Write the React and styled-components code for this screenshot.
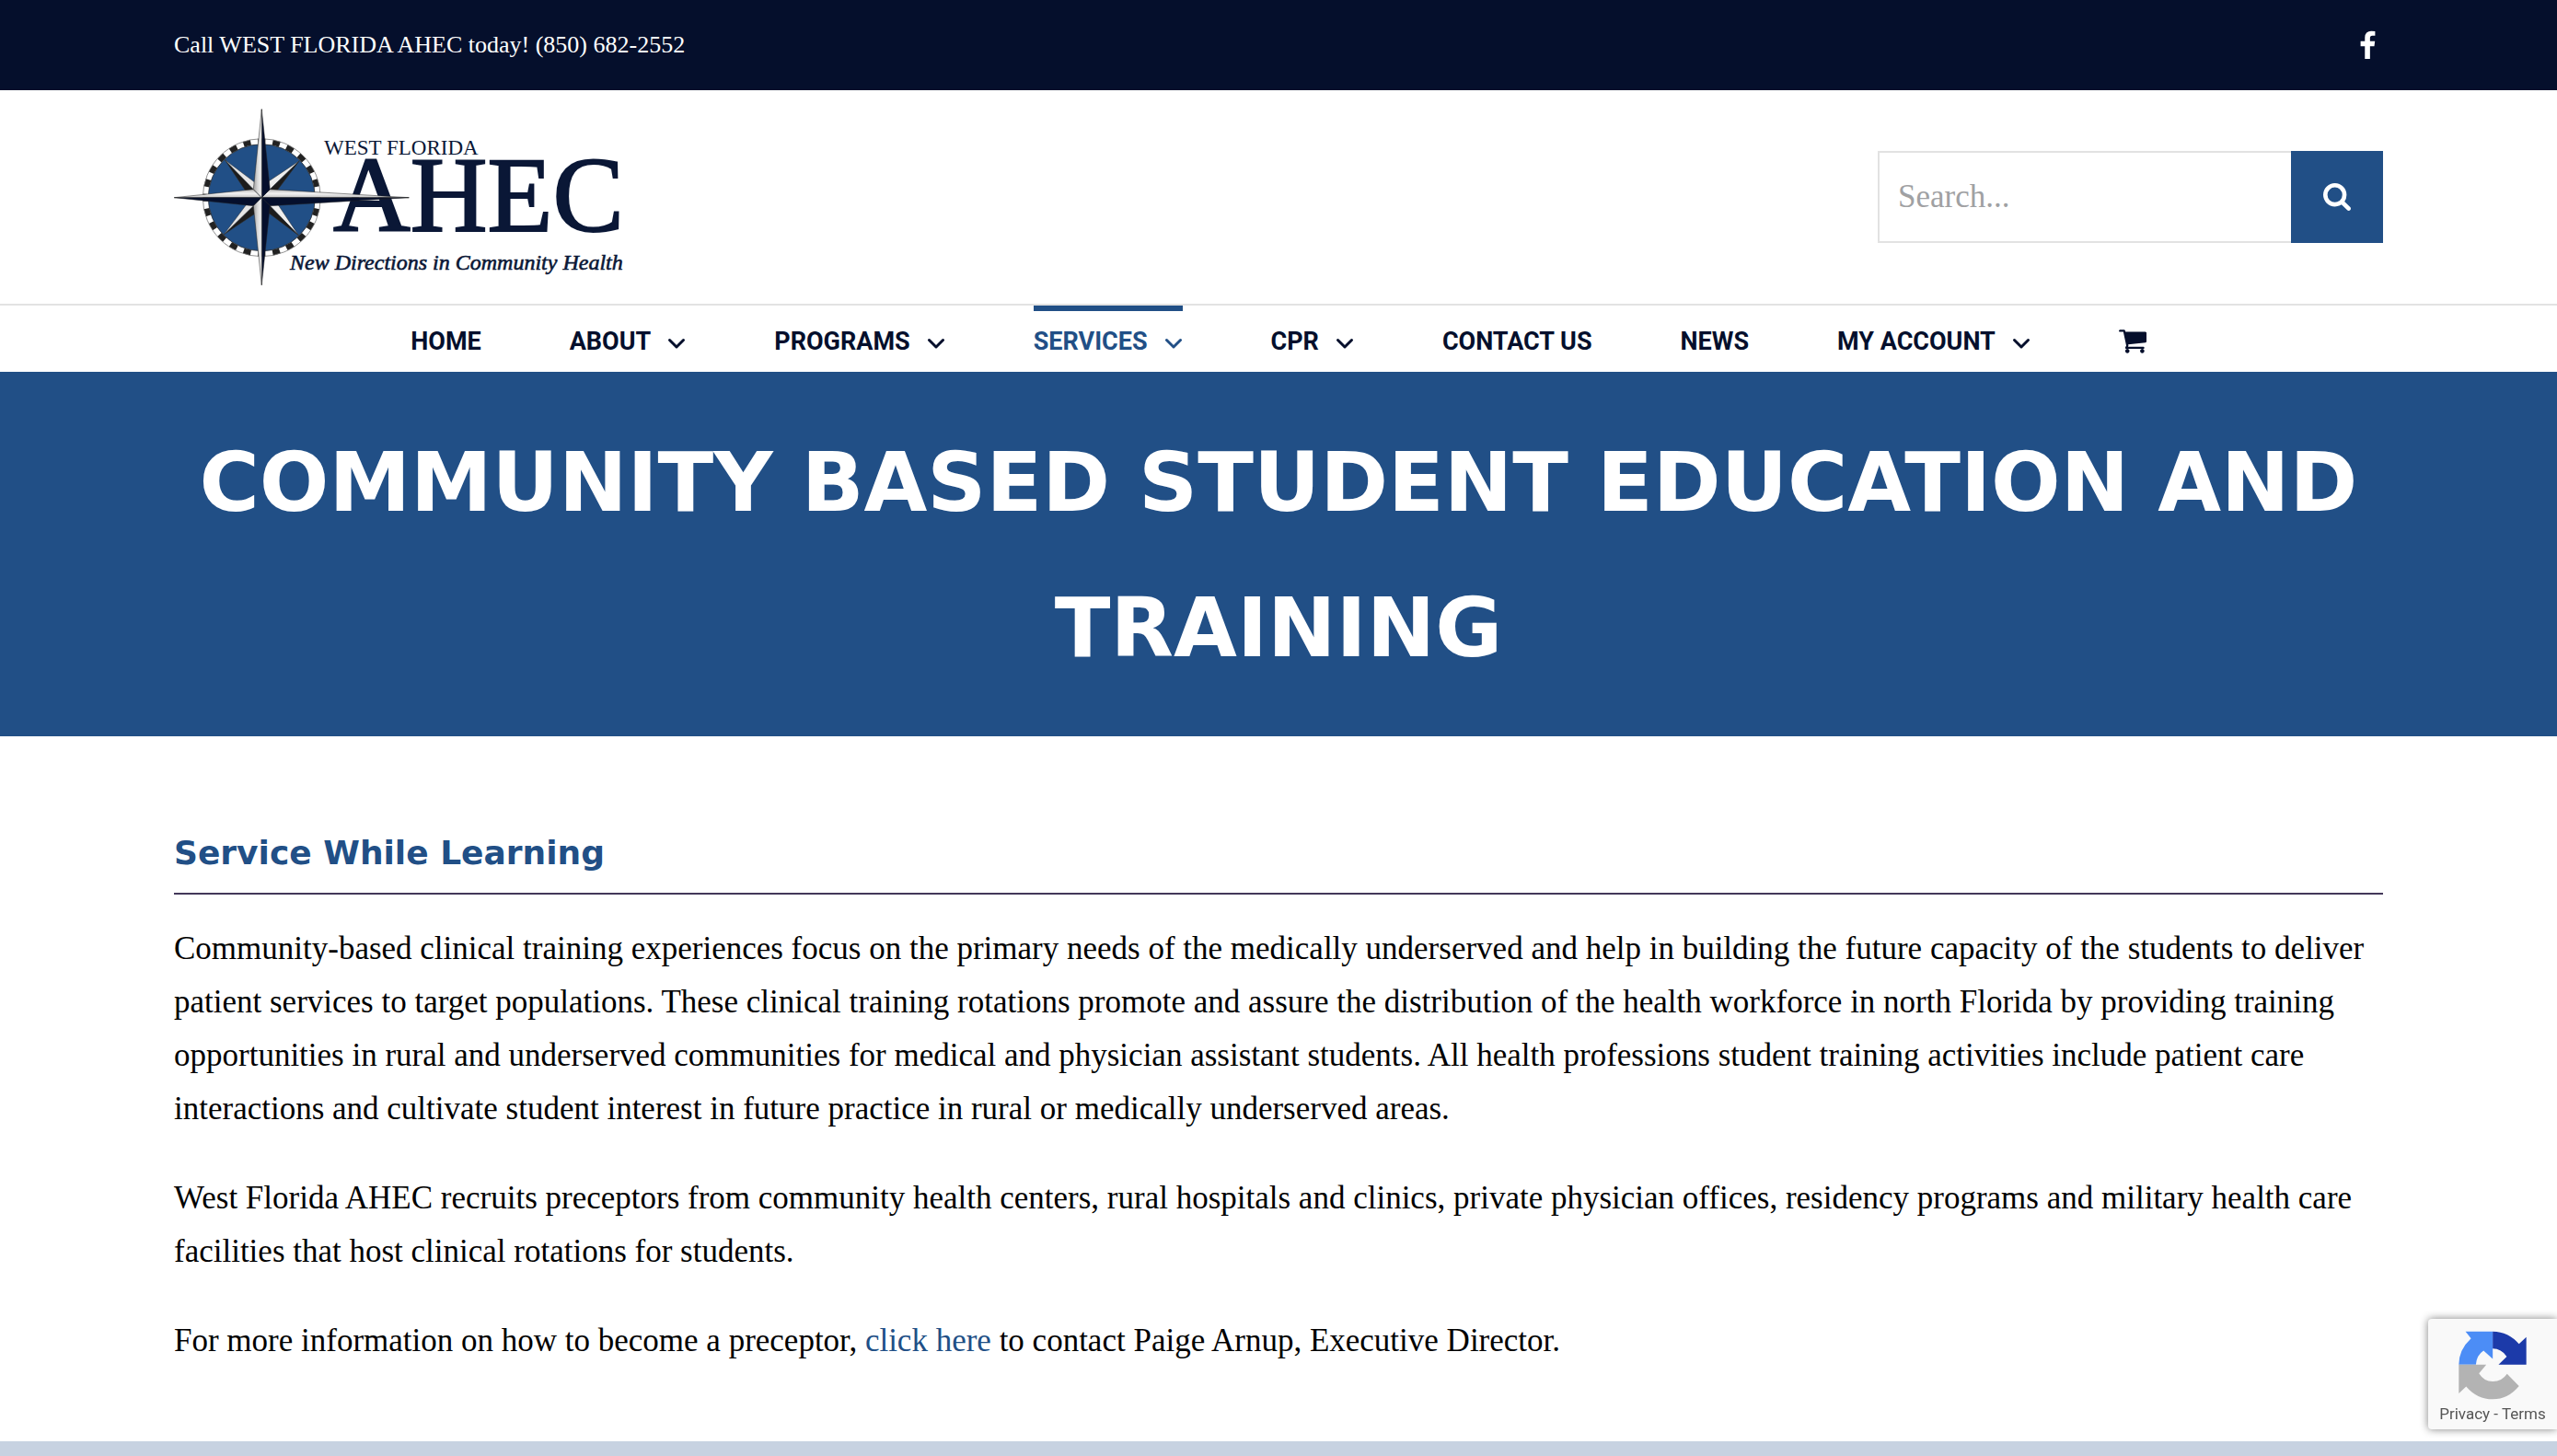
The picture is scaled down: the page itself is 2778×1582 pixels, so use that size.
import React from "react";
import styled, { createGlobalStyle } from "styled-components";

const navy = "#050f2c";
const blue = "#214f86";
const line = "#e2e2e2";
const serif = '"Liberation Serif", serif';
const display = '"DejaVu Sans", sans-serif';

const GlobalStyle = createGlobalStyle`
  *, *::before, *::after { box-sizing: border-box; }
  body { margin: 0; background: #fff; color: #000; font-family: ${serif}; }
  a { color: inherit; text-decoration: none; }
`;

const Page = styled.div`
  min-height: 100vh;
  display: flex;
  flex-direction: column;
`;

const Container = styled.div`
  width: calc(100% - 64px);
  max-width: 2400px;
  margin: 0 auto;
  display: flex;
  align-items: center;
  justify-content: space-between;
`;

const TopBar = styled.div`
  background: ${navy};
  color: #fff;
  font-size: 26px;
  line-height: 98px;
`;

const SocialLink = styled.a`
  display: flex;
  padding-right: 8px;
`;

const Header = styled.header`
  padding: 20px 0;
  border-bottom: 2px solid ${line};
`;

const LogoLink = styled.a`
  display: flex;
`;

const SearchForm = styled.form`
  display: flex;
  width: 549px;
  height: 100px;
`;

const SearchInput = styled.input`
  flex: 1;
  min-width: 0;
  padding: 0 20px;
  border: 2px solid ${line};
  border-right: 0;
  border-radius: 0;
  background: #fff;
  font-family: ${serif};
  font-size: 35px;
  &::placeholder { color: #a0a1a3; opacity: 1; }
`;

const SearchButton = styled.button`
  width: 100px;
  display: flex;
  align-items: center;
  justify-content: center;
  padding: 0;
  border: 0;
  background: ${blue};
  color: #fff;
`;

const Nav = styled.nav`
  display: flex;
  flex-wrap: wrap;
  justify-content: center;
  gap: 0 96px;
`;

const NavLink = styled.a`
  display: flex;
  align-items: center;
  gap: 18px;
  height: 72px;
  padding-bottom: 1px;
  border-top: 6px solid ${(p) => (p.$active ? blue : "transparent")};
  color: ${(p) => (p.$active ? blue : navy)};
  font-family: Roboto, sans-serif;
  font-size: 27px;
  font-weight: 700;
  line-height: 40px;
`;

const Hero = styled.section`
  padding: 41px 32px 39px;
  background: ${blue};
`;

const Title = styled.h1`
  max-width: 2400px;
  margin: 0 auto;
  color: #fff;
  font-family: ${display};
  font-size: 89px;
  font-weight: 700;
  line-height: 158px;
  text-align: center;
`;

const Main = styled.main`
  width: calc(100% - 64px);
  max-width: 2400px;
  margin: 0 auto;
  padding: 100px 0 80px;
`;

const SectionTitle = styled.h2`
  margin: 0 0 30px;
  padding-bottom: 16px;
  border-bottom: 2px solid #43385a;
  color: ${blue};
  font-family: ${display};
  font-size: 36px;
  font-weight: 700;
  line-height: 54px;
`;

const Paragraph = styled.p`
  margin: 0 0 39px;
  font-size: 35px;
  line-height: 58px;
  &:last-child { margin-bottom: 0; }
`;

const TextLink = styled.a`
  color: ${blue};
`;

const Footer = styled.footer`
  flex: 1;
  min-height: 16px;
  background: #c7d2e1;
`;

const Badge = styled.aside`
  position: fixed;
  right: 0;
  bottom: 29px;
  width: 140px;
  height: 120px;
  display: flex;
  flex-direction: column;
  align-items: center;
  padding-top: 13px;
  border-radius: 4px 0 0 4px;
  background: #f9f9f9;
  box-shadow: 0 0 10px #808080;
  color: #555;
  font-family: Roboto, sans-serif;
  font-size: 17px;
  line-height: 30px;
  white-space: nowrap;
`;

const rotations = [0, 90, 180, 270];

function Logo() {
  return (
    <svg width="496" height="192" viewBox="0 0 496 192" role="img" aria-label="West Florida AHEC">
      <defs>
        <linearGradient id="silverV" x1="0" x2="1" y1="0" y2="0">
          <stop offset="0" stopColor="#9c9c9c" />
          <stop offset="0.5" stopColor="#d8d8d8" />
          <stop offset="1" stopColor="#f6f6f6" />
        </linearGradient>
        <linearGradient id="silverH" x1="0" x2="0" y1="0" y2="1">
          <stop offset="0" stopColor="#b4b4b4" />
          <stop offset="0.5" stopColor="#f2f2f2" />
          <stop offset="1" stopColor="#c4c4c4" />
        </linearGradient>
      </defs>
      <g fill="#0a1736" fontFamily="Liberation Serif, serif">
        <text x="163" y="50" fontSize="23">WEST FLORIDA</text>
        <text x="173" y="133" fontSize="116" stroke="#0a1736" strokeWidth="2">AHEC</text>
        <text x="126" y="175" fontSize="24" fontStyle="italic" stroke="#0a1736" strokeWidth="0.6">
          New Directions in Community Health
        </text>
      </g>
      <g transform="translate(95.3 96.7)">
        <circle r="61" fill={blue} stroke="#fff" strokeWidth="6" />
        <circle r="61" fill="none" stroke="#222" strokeWidth="6" pathLength="48" strokeDasharray="1 1" strokeDashoffset="0.5" />
        <circle r="64" fill="none" stroke="#777" strokeWidth="0.8" />
        <circle r="58" fill="none" stroke="#333" strokeWidth="0.8" />
        {rotations.map((angle) => (
          <g key={angle} stroke="#333" strokeWidth="0.5" transform={`rotate(${angle})`}>
            <path d="M-40-41L-18-8L-6-6Z" fill={angle === 90 || angle === 180 ? "#eee" : "#1c1c1c"} />
            <path d="M-40-41L-8-17L-6-6Z" fill={angle === 90 || angle === 180 ? "#1c1c1c" : "#e6e6e6"} />
          </g>
        ))}
        <g stroke="#222" strokeWidth="0.5">
          <path d="M0 0L9-9L160 0Z" fill="url(#silverH)" />
          <path d="M0 0L9 9L160 0Z" fill={navy} />
          <path d="M0 0L-9-9L-95 0Z" fill="url(#silverH)" />
          <path d="M0 0L-9 9L-95 0Z" fill={navy} />
          <path d="M0 0L9-9L0-96Z" fill={navy} />
          <path d="M0 0L-9-9L0-96Z" fill="url(#silverV)" />
          <path d="M0 0L9 9L0 95Z" fill={navy} />
          <path d="M0 0L-9 9L0 95Z" fill="url(#silverV)" />
        </g>
      </g>
    </svg>
  );
}

function FacebookIcon() {
  return (
    <svg width="17" height="32" viewBox="62 8 930 1660" fill="currentColor" aria-hidden="true">
      <path d="M959 12v264h-157q-86 0-116 36t-30 108v189h293l-39 296h-254v759h-306v-759h-255v-296h255v-218q0-186 104-288.5t277-102.5q147 0 228 12z" />
    </svg>
  );
}

function SearchIcon() {
  return (
    <svg width="30" height="30" viewBox="0 128 1664 1664" fill="currentColor" aria-hidden="true">
      <path d="M1152 832q0-185-131.5-316.5t-316.5-131.5-316.5 131.5-131.5 316.5 131.5 316.5 316.5 131.5 316.5-131.5 131.5-316.5zm512 832q0 52-38 90t-90 38q-54 0-90-38l-343-342q-179 124-399 124-143 0-273.5-55.5t-225-150-150-225-55.5-273.5 55.5-273.5 150-225 225-150 273.5-55.5 273.5 55.5 225 150 150 225 55.5 273.5q0 220-124 399l343 343q37 37 37 90z" />
    </svg>
  );
}

function CartIcon() {
  return (
    <svg width="30" height="26" viewBox="0 256 1664 1408" fill="currentColor" aria-hidden="true">
      <path d="M640 1536q0 52-38 90t-90 38-90-38-38-90 38-90 90-38 90 38 38 90zm896 0q0 52-38 90t-90 38-90-38-38-90 38-90 90-38 90 38 38 90zm128-1088v512q0 24-16.5 42.5t-40.5 21.5l-1044 122q13 60 13 70 0 16-24 64h920q26 0 45 19t19 45-19 45-45 19h-1024q-26 0-45-19t-19-45q0-11 8-31.5t16-36 21.5-40 15.5-29.5l-177-823h-204q-26 0-45-19t-19-45 19-45 45-19h256q16 0 28.5 6.5t19.5 15.5 13 24.5 8 26 5.5 29.5 4.5 26h1201q26 0 45 19t19 45z" />
    </svg>
  );
}

function Chevron() {
  return (
    <svg width="20" height="20" viewBox="0 0 20 20" fill="none" stroke="currentColor" strokeWidth="3" strokeLinecap="round" strokeLinejoin="round" aria-hidden="true">
      <path d="M2.5 8.5L10 16L17.5 8.5" />
    </svg>
  );
}

function RecaptchaMark() {
  return (
    <svg width="74" height="75" viewBox="0 0 221 226" aria-hidden="true">
      <path fill="#4c8df6" d="M22 2H111V92L81 65Q58 80 56 111H0Q0 62 40 25Z" />
      <path fill="#1c3aa9" d="M111 2Q163 3 197 43L221 20V111H130L157 84Q139 58 111 58Z" />
      <path fill="#b3b3b3" d="M0 111H90L66 139Q82 165 111 166Q141 166 158 141L197 181Q162 224 111 224Q60 224 24 182L0 205Z" />
    </svg>
  );
}

const items = [
  { label: "HOME" },
  { label: "ABOUT", menu: true },
  { label: "PROGRAMS", menu: true },
  { label: "SERVICES", menu: true, active: true },
  { label: "CPR", menu: true },
  { label: "CONTACT US" },
  { label: "NEWS" },
  { label: "MY ACCOUNT", menu: true },
];

export default function App() {
  return (
    <Page>
      <GlobalStyle />
      <TopBar>
        <Container>
          <span>Call WEST FLORIDA AHEC today! (850) 682-2552</span>
          <SocialLink href="#facebook" aria-label="Facebook">
            <FacebookIcon />
          </SocialLink>
        </Container>
      </TopBar>
      <Header>
        <Container>
          <LogoLink href="#home">
            <Logo />
          </LogoLink>
          <SearchForm role="search">
            <SearchInput type="text" aria-label="Search" placeholder="Search..." />
            <SearchButton type="button" aria-label="Search">
              <SearchIcon />
            </SearchButton>
          </SearchForm>
        </Container>
      </Header>
      <Nav>
        {items.map(({ label, menu, active }) => (
          <NavLink key={label} href="#nav" $active={active}>
            {label}
            {menu && <Chevron />}
          </NavLink>
        ))}
        <NavLink href="#cart" aria-label="Cart">
          <CartIcon />
        </NavLink>
      </Nav>
      <Hero>
        <Title>COMMUNITY BASED STUDENT EDUCATION AND TRAINING</Title>
      </Hero>
      <Main>
        <SectionTitle>Service While Learning</SectionTitle>
        <Paragraph>
          Community-based clinical training experiences focus on the primary needs of the medically underserved and
          help in building the future capacity of the students to deliver patient services to target populations.
          These clinical training rotations promote and assure the distribution of the health workforce in north
          Florida by providing training opportunities in rural and underserved communities for medical and physician
          assistant students. All health professions student training activities include patient care interactions
          and cultivate student interest in future practice in rural or medically underserved areas.
        </Paragraph>
        <Paragraph>
          West Florida AHEC recruits preceptors from community health centers, rural hospitals and clinics, private
          physician offices, residency programs and military health care facilities that host clinical rotations for
          students.
        </Paragraph>
        <Paragraph>
          For more information on how to become a preceptor, <TextLink href="#contact">click here</TextLink> to
          contact Paige Arnup, Executive Director.
        </Paragraph>
      </Main>
      <Footer />
      <Badge>
        <RecaptchaMark />
        <div>
          <a href="#privacy">Privacy</a> - <a href="#terms">Terms</a>
        </div>
      </Badge>
    </Page>
  );
}
